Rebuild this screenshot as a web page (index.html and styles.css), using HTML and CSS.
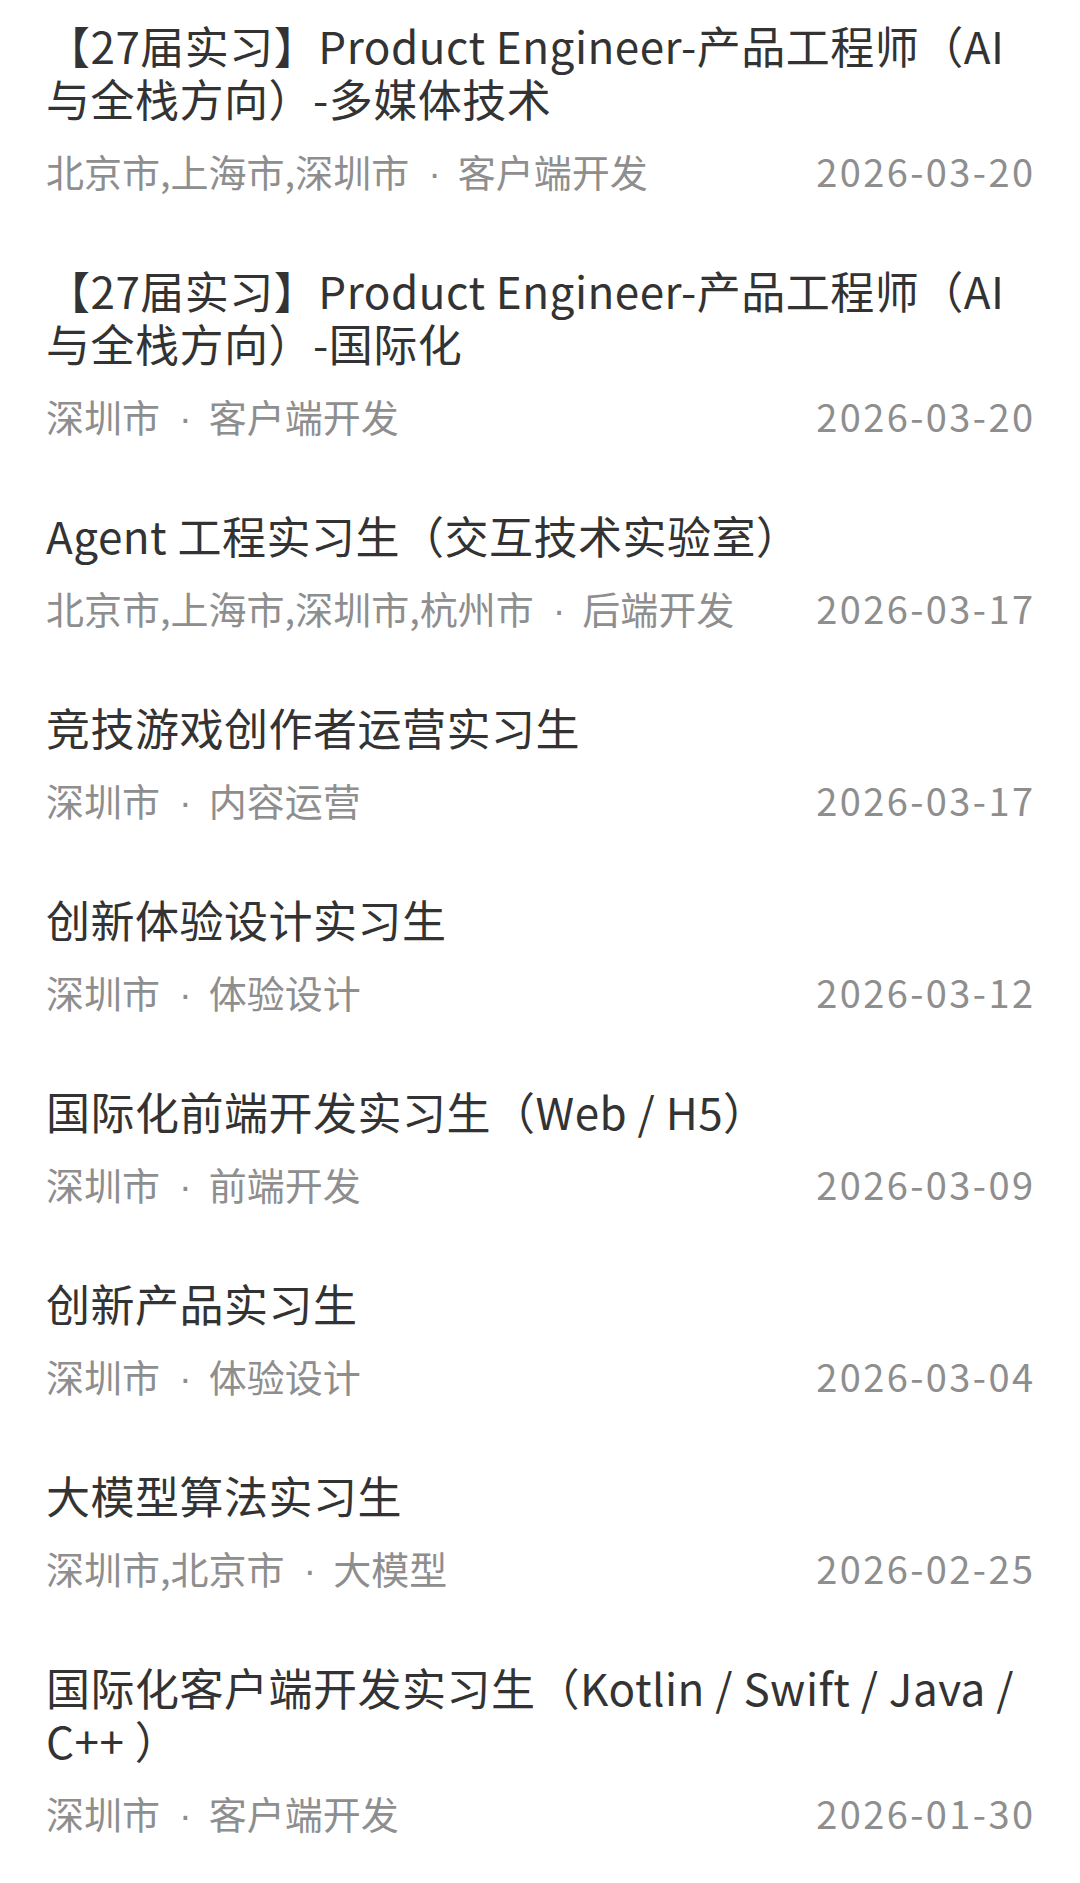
FILE: index.html
```html
<!DOCTYPE html>
<html lang="zh-CN">
<head>
<meta charset="utf-8">
<title>职位列表</title>
<link rel="stylesheet" href="styles.css">
</head>
<body>
<ul class="job-list">
  <li class="job">
    <div class="job-title">【27届实习】Product Engineer-产品工程师（AI与全栈方向）-多媒体技术</div>
    <div class="job-meta"><span class="job-info">北京市,上海市,深圳市<span class="sep">·</span>客户端开发</span><span class="job-date">2026-03-20</span></div>
  </li>
  <li class="job">
    <div class="job-title">【27届实习】Product Engineer-产品工程师（AI与全栈方向）-国际化</div>
    <div class="job-meta"><span class="job-info">深圳市<span class="sep">·</span>客户端开发</span><span class="job-date">2026-03-20</span></div>
  </li>
  <li class="job">
    <div class="job-title">Agent 工程实习生（交互技术实验室）</div>
    <div class="job-meta"><span class="job-info">北京市,上海市,深圳市,杭州市<span class="sep">·</span>后端开发</span><span class="job-date">2026-03-17</span></div>
  </li>
  <li class="job">
    <div class="job-title">竞技游戏创作者运营实习生</div>
    <div class="job-meta"><span class="job-info">深圳市<span class="sep">·</span>内容运营</span><span class="job-date">2026-03-17</span></div>
  </li>
  <li class="job">
    <div class="job-title">创新体验设计实习生</div>
    <div class="job-meta"><span class="job-info">深圳市<span class="sep">·</span>体验设计</span><span class="job-date">2026-03-12</span></div>
  </li>
  <li class="job">
    <div class="job-title">国际化前端开发实习生（Web / H5）</div>
    <div class="job-meta"><span class="job-info">深圳市<span class="sep">·</span>前端开发</span><span class="job-date">2026-03-09</span></div>
  </li>
  <li class="job">
    <div class="job-title">创新产品实习生</div>
    <div class="job-meta"><span class="job-info">深圳市<span class="sep">·</span>体验设计</span><span class="job-date">2026-03-04</span></div>
  </li>
  <li class="job">
    <div class="job-title">大模型算法实习生</div>
    <div class="job-meta"><span class="job-info">深圳市,北京市<span class="sep">·</span>大模型</span><span class="job-date">2026-02-25</span></div>
  </li>
  <li class="job">
    <div class="job-title">国际化客户端开发实习生（Kotlin / Swift / Java / C++ ）</div>
    <div class="job-meta"><span class="job-info">深圳市<span class="sep">·</span>客户端开发</span><span class="job-date">2026-01-30</span></div>
  </li>
</ul>
</body>
</html>
```
FILE: styles.css
```css
html, body {
  margin: 0;
  padding: 0;
  background: #ffffff;
}
body {
  font-family: "Noto Sans CJK SC", "Noto Sans", sans-serif;
  -webkit-font-smoothing: antialiased;
}
.job-list {
  list-style: none;
  margin: 0;
  padding: 19px 47px 0 46px;
}
.job {
  height: auto;
  padding-bottom: 70px;
}
.job-title {
  font-size: 44px;
  line-height: 53px;
  color: #333333;
  letter-spacing: 0.5px;
  word-break: break-all;
}
.job-meta {
  display: flex;
  justify-content: space-between;
  align-items: baseline;
  height: 46px;
  margin-top: 23px;
  font-size: 38px;
  line-height: 46px;
  color: #8e8e8e;
}
.sep {
  font-family: "Liberation Sans", "Noto Sans", sans-serif;
  line-height: 1;
  padding: 0 17px 0 19px;
}
.job-date {
  letter-spacing: 2.4px;
  margin-right: -2.4px;
}
```
